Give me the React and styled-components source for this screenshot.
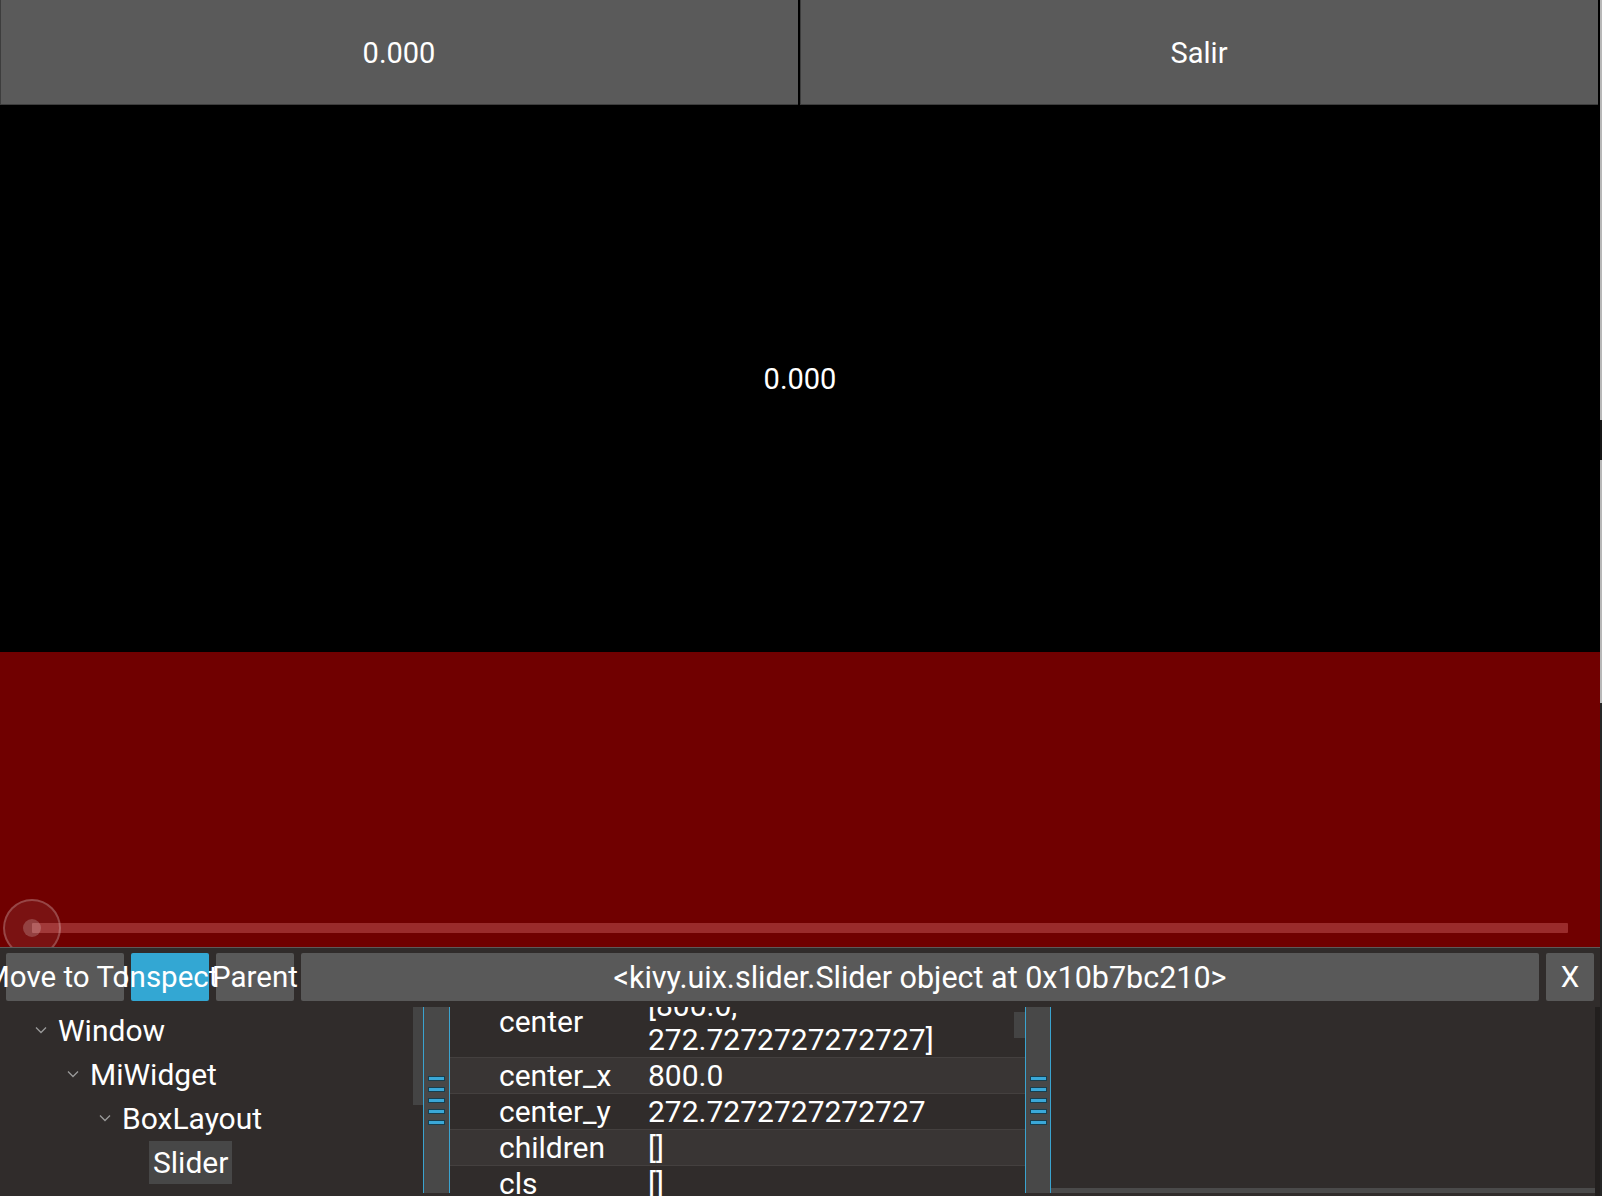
import React from "react";
import styled, { createGlobalStyle } from "styled-components";

const GlobalStyle = createGlobalStyle`
  html, body {
    margin: 0;
    padding: 0;
    background: #000;
  }

  body {
    font-family: Roboto, "Liberation Sans", sans-serif;
    color: #fff;
    overflow: hidden;
  }
`;

const Screen = styled.div`
  display: flex;
  width: 1602px;
  height: 1196px;
`;

const AppFrame = styled.div`
  width: 1600px;
  height: 1196px;
  display: flex;
  flex-direction: column;
`;

const EdgeStrip = styled.div`
  width: 2px;
  background: linear-gradient(
    to bottom,
    #b8b8b8 0 420px,
    #151515 420px 460px,
    #b8b8b8 460px 703px,
    #262626 703px
  );
`;

const TopBar = styled.div`
  display: flex;
  gap: 2px;
  height: 105px;
  padding-right: 2px;
  background: #000;
`;

const TopButton = styled.div`
  flex: 1;
  display: flex;
  align-items: center;
  justify-content: center;
  background: #5a5a5a;
  box-shadow: inset 0 -1px 0 #3d3d3d, inset 1px 0 0 #3d3d3d;
  font-size: 29px;
`;

const Canvas = styled.div`
  height: 547px;
  display: flex;
  align-items: center;
  justify-content: center;
  background: #000;
  font-size: 29px;
`;

const SliderArea = styled.div`
  position: relative;
  height: 295px;
  display: flex;
  flex-direction: column;
  justify-content: flex-end;
  padding: 0 32px 14px;
  box-sizing: border-box;
  background: #700000;
  overflow: hidden;
`;

const Track = styled.div`
  height: 10px;
  background: #9a2b2b;
  border-radius: 1px;
`;

const Knob = styled.div`
  position: absolute;
  left: 3px;
  bottom: -10px;
  width: 58px;
  height: 58px;
  box-sizing: border-box;
  border-radius: 50%;
  border: 2px solid rgba(255, 255, 255, 0.22);
  background: rgba(255, 255, 255, 0.07);
  display: flex;
  align-items: center;
  justify-content: center;

  &::after {
    content: "";
    width: 18px;
    height: 18px;
    border-radius: 50%;
    background: rgba(255, 255, 255, 0.2);
  }
`;

const Inspector = styled.div`
  flex: 1;
  display: flex;
  flex-direction: column;
  background: #302c2b;
  border-top: 1px solid #5e5a59;
  min-height: 0;
`;

const Toolbar = styled.div`
  display: flex;
  gap: 7px;
  padding: 5px 6px 0;
`;

const ToolButton = styled.div`
  flex: ${(p) => (p.$grow ? "1" : "none")};
  width: ${(p) => (p.$width ? `${p.$width}px` : "auto")};
  height: 48px;
  display: flex;
  align-items: center;
  justify-content: center;
  white-space: nowrap;
  border-radius: 2px;
  background: ${(p) => (p.$active ? "#33a7d3" : "#595959")};
  font-size: ${(p) => (p.$grow ? "30.5px" : "29.5px")};
`;

const Body = styled.div`
  flex: 1;
  display: flex;
  padding-top: 6px;
  min-height: 0;
`;

const TreePane = styled.div`
  width: 413px;
  display: flex;
  flex-direction: column;
  padding-top: 1px;
`;

const TreeRow = styled.div`
  height: 44px;
  display: flex;
  align-items: center;
  padding-left: ${(p) => p.$indent}px;
  font-size: 30px;
`;

const Chevron = styled.svg`
  width: 12px;
  height: 8px;
  margin-right: 11px;
  flex: none;
`;

const TreeLabel = styled.span`
  display: flex;
  align-items: center;
  height: 43px;
  padding: ${(p) => (p.$selected ? "0 4px" : "0")};
  background: ${(p) => (p.$selected ? "#474747" : "transparent")};
`;

const TreeScroll = styled.div`
  width: 10px;
`;

const TreeThumb = styled.div`
  height: 98px;
  background: #444;
`;

const Handle = styled.div`
  width: ${(p) => p.$width}px;
  height: 186px;
  box-sizing: border-box;
  display: flex;
  flex-direction: column;
  align-items: center;
  justify-content: center;
  gap: 8px;
  background: #484848;
  border-left: 1px solid #3aa3cf;
  border-right: 1px solid #3aa3cf;
`;

const Grip = styled.div`
  width: 15px;
  height: 3px;
  background: #3aa8d8;
  box-shadow: 0 0 0 1px #173f4f;
`;

const PropsPane = styled.div`
  position: relative;
  width: 575px;
  overflow: hidden;
`;

const PropsList = styled.div`
  margin-top: -22px;
`;

const PropRow = styled.div`
  display: flex;
  align-items: center;
  height: ${(p) => p.$height}px;
  box-sizing: border-box;
  border-top: 1px solid #44403f;
  background: ${(p) => (p.$alt ? "#393534" : "#302c2b")};
  font-size: 30px;
  white-space: nowrap;
`;

const PropName = styled.div`
  width: 198px;
  padding-left: 49px;
  box-sizing: border-box;
  flex: none;
`;

const PropValue = styled.div`
  line-height: 34px;
  padding-top: ${(p) => (p.$multi ? "3px" : "0")};
`;

const PropsThumb = styled.div`
  position: absolute;
  top: 5px;
  right: 0;
  width: 11px;
  height: 26px;
  background: #444;
`;

const RestPane = styled.div`
  flex: 1;
  display: flex;
  flex-direction: column;
  justify-content: flex-end;
  border-right: 5px solid #221f1e;
`;

const HScroll = styled.div`
  height: 5px;
  margin-bottom: 3px;
  background: #4a4a4a;
`;

const tree = [
  { name: "Window", level: 0, open: true },
  { name: "MiWidget", level: 1, open: true },
  { name: "BoxLayout", level: 2, open: true },
  { name: "Slider", level: 3, selected: true },
];

const props = [
  { name: "center", value: ["[800.0,", "272.7272727272727]"], height: 72 },
  { name: "center_x", value: ["800.0"], height: 36 },
  { name: "center_y", value: ["272.7272727272727"], height: 36 },
  { name: "children", value: ["[]"], height: 36 },
  { name: "cls", value: ["[]"], height: 36 },
];

function ChevronIcon() {
  return (
    <Chevron viewBox="0 0 12 8">
      <path d="M1 1.5 L6 6.5 L11 1.5" fill="none" stroke="#9a9a9a" strokeWidth="1.3" />
    </Chevron>
  );
}

function SplitHandle({ width }) {
  return (
    <Handle $width={width}>
      {[0, 1, 2, 3, 4].map((i) => (
        <Grip key={i} />
      ))}
    </Handle>
  );
}

function App() {
  return (
    <>
      <GlobalStyle />
      <Screen>
        <AppFrame>
          <TopBar>
            <TopButton>0.000</TopButton>
            <TopButton>Salir</TopButton>
          </TopBar>

          <Canvas>0.000</Canvas>

          <SliderArea>
            <Track />
            <Knob />
          </SliderArea>

          <Inspector>
            <Toolbar>
              <ToolButton $width={118}>Move to Top</ToolButton>
              <ToolButton $width={78} $active>
                Inspect
              </ToolButton>
              <ToolButton $width={78}>Parent</ToolButton>
              <ToolButton $grow>{"<kivy.uix.slider.Slider object at 0x10b7bc210>"}</ToolButton>
              <ToolButton $width={48}>X</ToolButton>
            </Toolbar>

            <Body>
              <TreePane>
                {tree.map((node) => (
                  <TreeRow
                    key={node.name}
                    $indent={node.open ? 35 + node.level * 32 : 149}
                  >
                    {node.open && <ChevronIcon />}
                    <TreeLabel $selected={node.selected}>{node.name}</TreeLabel>
                  </TreeRow>
                ))}
              </TreePane>
              <TreeScroll>
                <TreeThumb />
              </TreeScroll>

              <SplitHandle width={27} />

              <PropsPane>
                <PropsList>
                  {props.map((p, i) => (
                    <PropRow key={p.name} $height={p.height} $alt={i % 2 === 1}>
                      <PropName>{p.name}</PropName>
                      <PropValue $multi={p.value.length > 1}>
                        {p.value.map((line) => (
                          <div key={line}>{line}</div>
                        ))}
                      </PropValue>
                    </PropRow>
                  ))}
                </PropsList>
                <PropsThumb />
              </PropsPane>

              <SplitHandle width={26} />

              <RestPane>
                <HScroll />
              </RestPane>
            </Body>
          </Inspector>
        </AppFrame>
        <EdgeStrip />
      </Screen>
    </>
  );
}

export default App;
